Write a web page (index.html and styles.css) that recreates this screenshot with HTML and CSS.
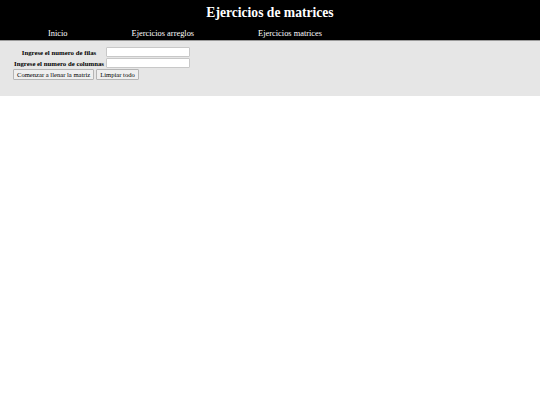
FILE: index.html
```html
<!DOCTYPE html>
<html lang="es">
<head>
<meta charset="utf-8">
<title>Ejercicios de matrices</title>
<link rel="stylesheet" href="styles.css">
</head>
<body>
<header class="top">
  <h1 class="title">Ejercicios de matrices</h1>
  <nav class="menu">
    <a href="#">Inicio</a>
    <a href="#">Ejercicios arreglos</a>
    <a href="#">Ejercicios matrices</a>
  </nav>
</header>
<main class="panel">
  <table class="form">
    <tr>
      <th>Ingrese el numero de filas</th>
      <td><input type="text" class="field"></td>
    </tr>
    <tr>
      <th>Ingrese el numero de columnas</th>
      <td><input type="text" class="field"></td>
    </tr>
    <tr>
      <td colspan="2" class="actions">
        <button class="btn">Comenzar a llenar la matriz</button><button class="btn">Limpiar todo</button>
      </td>
    </tr>
  </table>
</main>
</body>
</html>
```
FILE: styles.css
```css
html, body {
  margin: 0;
  padding: 0;
  background: #ffffff;
  font-family: "Liberation Serif", "Times New Roman", serif;
}
.top {
  background: #000000;
  color: #ffffff;
  border-bottom: 1px solid #9a9a9a;
}
.title {
  margin: 0;
  padding-top: 5px;
  height: 21px;
  font-size: 13.6px;
  font-weight: bold;
  text-align: center;
  line-height: 15px;
}
.menu {
  display: flex;
  gap: 64px;
  padding-left: 48px;
  height: 14px;
  font-size: 8.4px;
  line-height: 15px;
}
.menu a {
  color: #ffffff;
  text-decoration: none;
}
.panel {
  background: #e6e6e6;
  height: 55px;
  padding: 6px 0 0 12px;
  box-sizing: border-box;
}
.form {
  border-collapse: separate;
  border-spacing: 0;
  font-size: 6.8px;
}
.form th {
  font-weight: bold;
  text-align: center;
  padding: 0 2px 0 2px;
  height: 11px;
}
.form td {
  padding: 0 0 1px 0;
}
.field {
  width: 84px;
  height: 10px;
  box-sizing: border-box;
  border: 1px solid #c8c8c8;
  border-radius: 1px;
  background: #ffffff;
  margin: 0;
  padding: 0;
  display: block;
}
.actions {
  padding-top: 1px;
}
.btn {
  font-family: "Liberation Serif", "Times New Roman", serif;
  font-size: 6.6px;
  height: 11px;
  line-height: 8px;
  padding: 0 3px;
  margin: 0 1px 0 1px;
  background: #efefef;
  border: 1px solid #b5b5b5;
  border-radius: 1px;
  color: #000;
}
```
